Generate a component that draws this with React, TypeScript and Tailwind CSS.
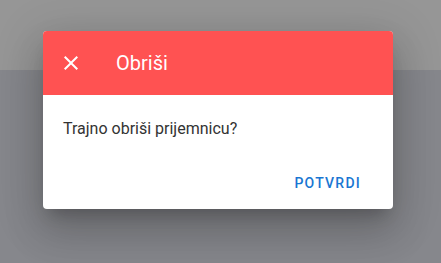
export default function App() {
  return (
    <div className="relative w-[441px] h-[263px] overflow-hidden flex flex-col font-['Roboto',sans-serif]">
      {/* app behind the scrim */}
      <div className="h-[70px] bg-[#969696]" />
      <div className="flex-1 bg-[#86878c]" />

      {/* dialog */}
      <div className="absolute left-[43px] top-[31px] w-[350px] bg-white rounded overflow-hidden shadow-[0_11px_15px_-7px_rgba(0,0,0,0.2),0_24px_38px_3px_rgba(0,0,0,0.14),0_9px_46px_8px_rgba(0,0,0,0.12)]">
        <div className="h-16 bg-[#ff5252] flex items-center px-4">
          <svg viewBox="0 0 24 24" className="w-6 h-6 fill-white">
            <path d="M19 6.41L17.59 5 12 10.59 6.41 5 5 6.41 10.59 12 5 17.59 6.41 19 12 13.41 17.59 19 19 17.59 13.41 12z" />
          </svg>
          <span className="ml-[33px] text-white text-[20px] leading-8">Obriši</span>
        </div>
        <div className="px-5 pt-[22px] pb-6 text-base leading-6 text-[#333]">
          Trajno obriši prijemnicu?
        </div>
        <div className="flex justify-end pr-4 pb-2">
          <button className="h-9 px-4 text-sm leading-5 font-medium tracking-[0.0892em] uppercase text-[#1976d2] rounded">
            Potvrdi
          </button>
        </div>
      </div>
    </div>
  );
}
